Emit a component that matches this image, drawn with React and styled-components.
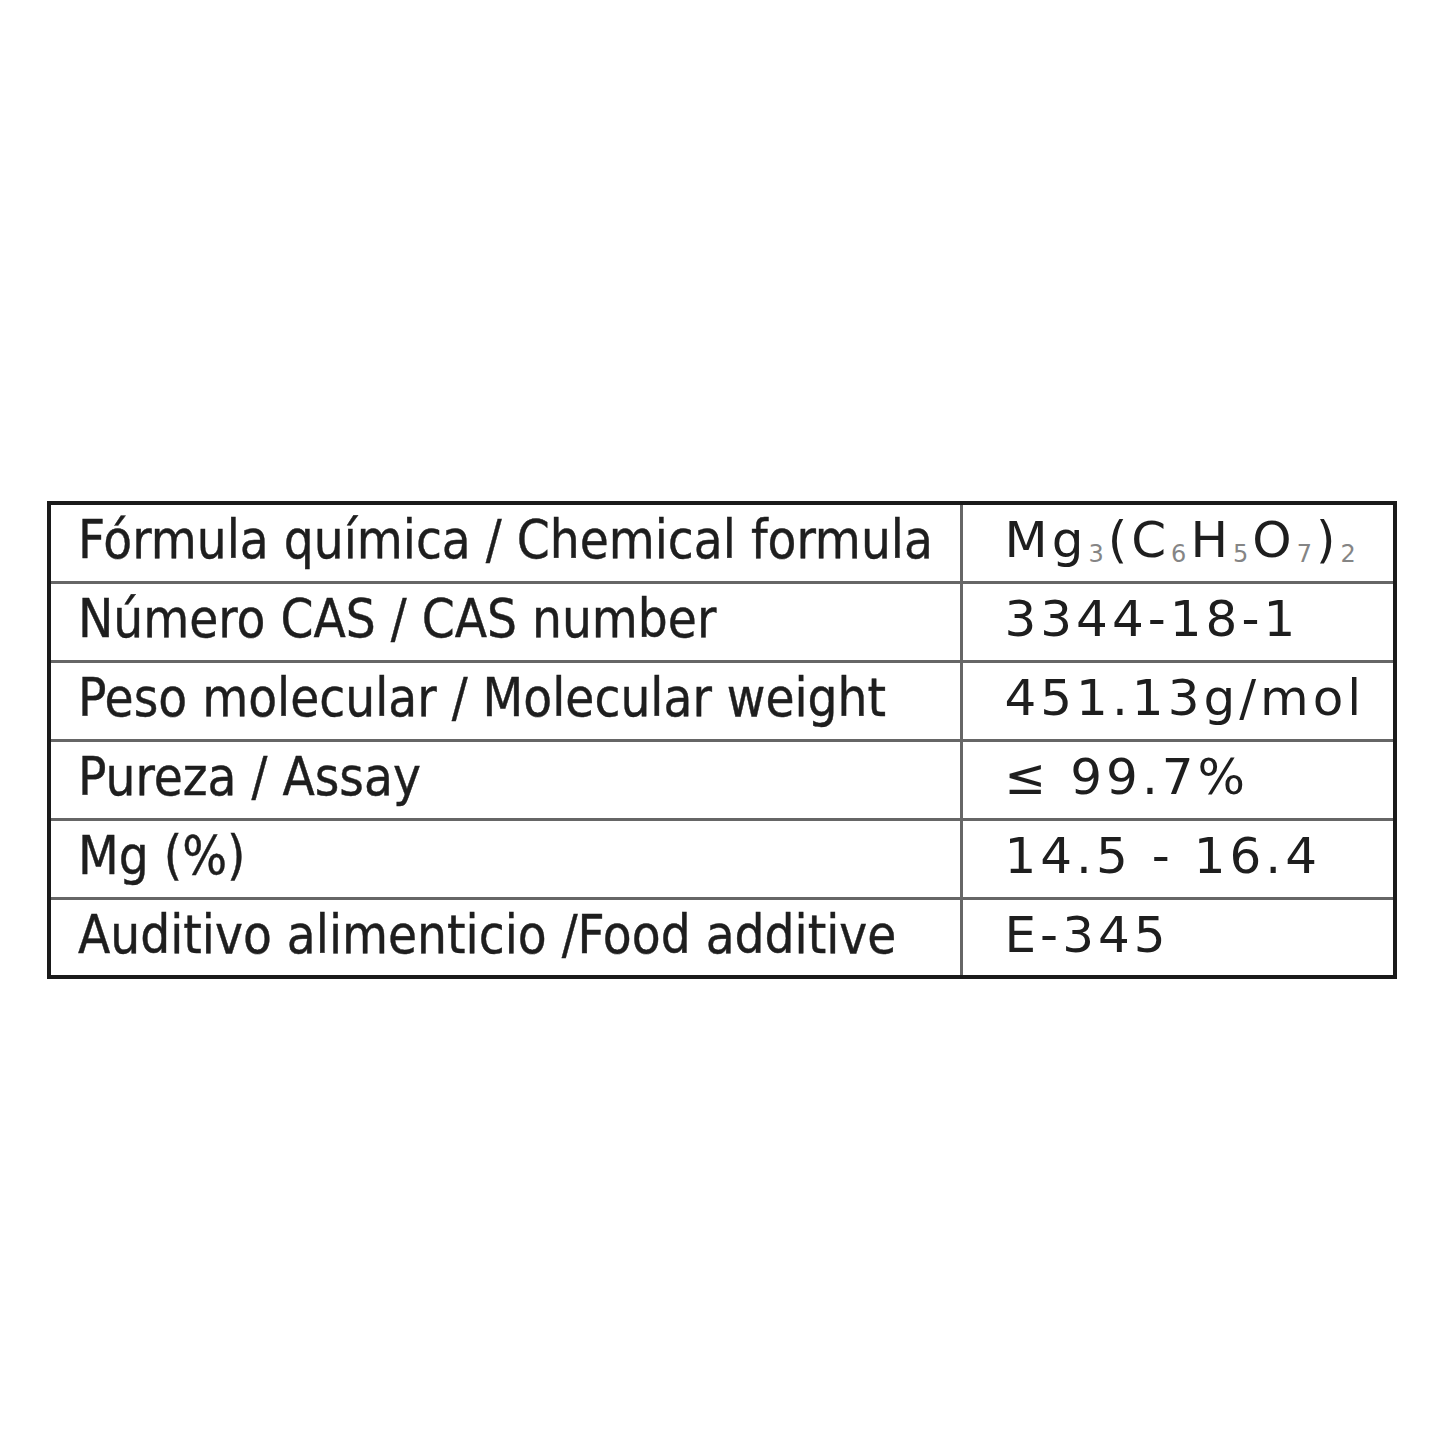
import React from "react";
import styled, { createGlobalStyle } from "styled-components";

const Global = createGlobalStyle`
  html, body { margin: 0; padding: 0; background: #ffffff; }
  body { width: 1445px; height: 1445px; overflow: hidden; }
`;

const Page = styled.div`
  padding: 501px 0 0 47px;
`;

const Table = styled.table`
  width: 1350px;
  border-collapse: collapse;
  border: 4px solid #1a1a1a;
  table-layout: fixed;
`;

const Row = styled.tr`
  height: 79px;
`;

const Cell = styled.td`
  box-sizing: border-box;
  border: 3px solid #666666;
  color: #1e1e1e;
  white-space: nowrap;
  vertical-align: middle;
  line-height: 1;
  padding-bottom: 6px;
`;

const Label = styled(Cell)`
  width: 912px;
  padding-left: 27px;
  font-family: "DejaVu Sans Condensed", "DejaVu Sans", sans-serif;
  font-size: 52.5px;
  -webkit-text-stroke: 0.4px #1e1e1e;
`;

const Value = styled(Cell)`
  padding-left: 42px;
  font-family: "DejaVu Sans", Verdana, sans-serif;
  font-size: 50px;
  letter-spacing: 4px;
`;

const Sub = styled.sub`
  font-size: 24px;
  color: #858585;
  vertical-align: -5px;
  letter-spacing: 2px;
  margin: 0 2px 0 1px;
`;

const rows = [
  ["Fórmula química / Chemical formula", "formula"],
  ["Número CAS / CAS number", "3344-18-1"],
  ["Peso molecular / Molecular weight", "451.13g/mol"],
  ["Pureza / Assay", "≤ 99.7%"],
  ["Mg (%)", "14.5 - 16.4"],
  ["Auditivo alimenticio /Food additive", "E-345"],
];

const Formula = () => (
  <>
    Mg<Sub>3</Sub>(C<Sub>6</Sub>H<Sub>5</Sub>O<Sub>7</Sub>)<Sub>2</Sub>
  </>
);

export default function App() {
  return (
    <>
      <Global />
      <Page>
        <Table>
          <tbody>
            {rows.map(([label, value]) => (
              <Row key={label}>
                <Label>{label}</Label>
                <Value>{value === "formula" ? <Formula /> : value}</Value>
              </Row>
            ))}
          </tbody>
        </Table>
      </Page>
    </>
  );
}
